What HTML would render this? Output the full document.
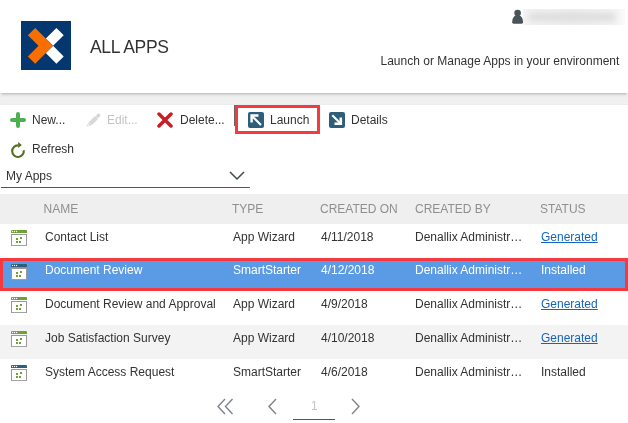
<!DOCTYPE html>
<html><head><meta charset="utf-8">
<style>
*{margin:0;padding:0;box-sizing:border-box}
html,body{width:628px;height:423px;overflow:hidden;background:#fff;}
body{will-change:transform;font-family:"Liberation Sans",sans-serif;font-size:12px;color:#333}
.abs{position:absolute}
.t{position:absolute;white-space:nowrap;line-height:14px}
.row{position:absolute;left:0;width:628px}
.link{color:#1565c0;text-decoration:underline}
</style></head><body>
<!-- header -->
<div class="abs" style="left:21px;top:21px;width:50px;height:49px;background:#04376f"></div>
<svg class="abs" style="left:21px;top:21px" width="50" height="49" viewBox="0 0 50 49">
  <path d="M35.4 6.9 L42.7 14.2 L32.1 24.8 L24.8 17.5 Z" fill="#fff"/>
  <path d="M24.8 32.1 L32.1 24.8 L42.7 35.4 L35.4 42.7 Z" fill="#fff"/>
  <path d="M14.2 6.9 L32.1 24.8 L14.2 42.7 L6.9 35.4 L17.5 24.8 L6.9 14.2 Z" fill="#f96e00"/>
</svg>
<div class="t" style="left:90px;top:37px;font-size:17.5px;line-height:20px;letter-spacing:-0.3px;color:#333">ALL APPS</div>
<svg class="abs" style="left:511px;top:8px" width="13" height="17" viewBox="0 0 13 17"><path d="M1.2 14.3C1.2 9.8 3.3 6.9 6.6 6.9C9.9 6.9 12 9.8 12 14.3Q12 15.7 10.6 15.7H2.6Q1.2 15.7 1.2 14.3Z" fill="#4a5358"/><circle cx="6.6" cy="5" r="3.3" fill="#4a5358"/></svg>
<div class="abs" style="left:523px;top:9px;width:102px;height:16px;overflow:hidden;background:linear-gradient(90deg,#f4f4f4,#eeeeee 50%,#f4f4f4 90%,#fafafa)">
 <div class="abs" style="left:6px;top:4px;width:86px;height:8px;background:#dcdcdc;filter:blur(3px)"></div>
</div>
<div class="t" style="left:380.5px;top:54px">Launch or Manage Apps in your environment</div>
<!-- header shadow + gray band -->
<div class="abs" style="left:0;top:93px;width:628px;height:12px;background:linear-gradient(#c6c6c6 0px,#c6c6c6 1px,#d8d8d8 1px,#d8d8d8 2px,#e5e5e5 2px,#e5e5e5 3px,#ebebeb 3px,#ebebeb 4px,#f0f0f0 4px,#f0f0f0 11px,#e9eded 11px)"></div>

<div class="abs" style="left:0;top:93px;width:2px;height:4px;background:rgba(240,240,240,0.6)"></div>
<div class="abs" style="left:626px;top:93px;width:2px;height:4px;background:rgba(240,240,240,0.6)"></div>
<!-- toolbar -->
<svg class="abs" style="left:10px;top:112px" width="16" height="16" viewBox="0 0 16 16"><path d="M8 2V14M2 8H14" stroke="#4caf50" stroke-width="4" stroke-linecap="round"/></svg>
<div class="t" style="left:32px;top:113px">New...</div>
<svg class="abs" style="left:82px;top:108px" width="24" height="24" viewBox="0 0 24 24"><path d="M7 14L10 17L4.3 18.5Z" fill="#d8d8d8"/><path d="M7 14L10 17L16 11L13 8Z" fill="#d8d8d8"/><path d="M15.7 8.3L16.7 7.3" stroke="#d8d8d8" stroke-width="3.4" stroke-linecap="round"/><circle cx="6.5" cy="16.5" r="0.7" fill="#fff"/></svg>
<div class="t" style="left:107px;top:113px;color:#c4c4c4">Edit...</div>
<svg class="abs" style="left:157px;top:112px" width="16" height="16" viewBox="0 0 16 16"><path d="M2 2L14 14M14 2L2 14" stroke="#c62026" stroke-width="3.5" stroke-linecap="round"/></svg>
<div class="t" style="left:180px;top:113px">Delete...</div>
<div class="abs" style="left:234px;top:105px;width:1px;height:21px;background:#666"></div>
<div class="abs" style="left:235px;top:105px;width:85px;height:29px;border:3px solid #f43a3e"></div>
<svg class="abs" style="left:248px;top:112px" width="16" height="16" viewBox="0 0 16 16"><rect width="16" height="16" rx="2" fill="#2f5e7b"/><path d="M3.6 10.5V3.6H10.5" stroke="#fff" stroke-width="2.5" fill="none"/><path d="M4 4L13 13" stroke="#fff" stroke-width="2" fill="none"/></svg>
<div class="t" style="left:270px;top:113px">Launch</div>
<svg class="abs" style="left:329px;top:112px" width="16" height="16" viewBox="0 0 16 16"><rect width="16" height="16" rx="2" fill="#2f5e7b"/><path d="M11.8 5.5V11.8H5.5" stroke="#fff" stroke-width="2.6" fill="none"/><path d="M11.5 11.5L3.3 3.3" stroke="#fff" stroke-width="2" fill="none"/></svg>
<div class="t" style="left:351px;top:113px">Details</div>
<svg class="abs" style="left:6px;top:139px" width="24" height="24" viewBox="0 0 24 24"><path d="M12.3 6.4A5.8 5.8 0 1 0 17.7 11.2" stroke="#556b1e" stroke-width="2.1" fill="none"/><path d="M12.2 3L15.8 5.9L12.2 8.9Z" fill="#556b1e"/></svg>
<div class="t" style="left:32px;top:142px">Refresh</div>

<!-- dropdown -->
<div class="t" style="left:6px;top:169px">My Apps</div>
<svg class="abs" style="left:229px;top:171px" width="16" height="10" viewBox="0 0 16 10"><path d="M1 1L8 8L15 1" stroke="#3d4a50" stroke-width="1.5" fill="none"/></svg>
<div class="abs" style="left:1px;top:187px;width:249px;height:1px;background:#555"></div>

<!-- table header -->
<div class="abs" style="left:0;top:194px;width:628px;height:30px;background:#efefef"></div>
<div class="t" style="left:43.5px;top:202px;color:#8f8f8f">NAME</div>
<div class="t" style="left:232px;top:202px;color:#8f8f8f">TYPE</div>
<div class="t" style="left:320px;top:202px;color:#8f8f8f">CREATED ON</div>
<div class="t" style="left:415px;top:202px;color:#8f8f8f">CREATED BY</div>
<div class="t" style="left:540px;top:202px;color:#8f8f8f">STATUS</div>

<div>
<div class="row" style="top:224px;height:34px;background:#fff;color:#333">
<svg class="abs" style="left:11px;top:6px" width="16" height="16" viewBox="0 0 16 16"><path d="M0 3V1Q0 0 1 0H15Q16 0 16 1V3Z" fill="#6ea333"/><circle cx="1.6" cy="1.5" r="0.65" fill="#fff"/><circle cx="3.6" cy="1.5" r="0.65" fill="#fff"/><circle cx="5.6" cy="1.5" r="0.65" fill="#fff"/><rect x="0.5" y="4.5" width="15" height="11.1" fill="#fff" stroke="#999" stroke-width="1"/><rect x="5" y="8" width="2" height="2" fill="#6ea333"/><rect x="9" y="7" width="2" height="2" fill="#6ea333"/><rect x="5" y="11" width="2" height="2" fill="#6ea333"/><rect x="8" y="11" width="2" height="2" fill="#6ea333"/></svg>
<div class="t" style="left:45px;top:6px">Contact List</div>
<div class="t" style="left:233px;top:6px">App Wizard</div>
<div class="t" style="left:321px;top:6px">4/11/2018</div>
<div class="t" style="left:415px;top:6px">Denallix Administr…</div>
<div class="t link" style="left:541px;top:6px">Generated</div>
</div>
<div class="row" style="top:258px;height:33px;background:#5b9be6;color:#fff">
<svg class="abs" style="left:11px;top:6px" width="16" height="16" viewBox="0 0 16 16"><path d="M0 3V1Q0 0 1 0H15Q16 0 16 1V3Z" fill="#2f5e7b"/><circle cx="1.6" cy="1.5" r="0.65" fill="#fff"/><circle cx="3.6" cy="1.5" r="0.65" fill="#fff"/><circle cx="5.6" cy="1.5" r="0.65" fill="#fff"/><rect x="0.5" y="4.5" width="15" height="11.1" fill="#fff" stroke="#999" stroke-width="1"/><rect x="5" y="8" width="2" height="2" fill="#6ea333"/><rect x="9" y="7" width="2" height="2" fill="#6ea333"/><rect x="5" y="11" width="2" height="2" fill="#6ea333"/><rect x="8" y="11" width="2" height="2" fill="#6ea333"/></svg>
<div class="t" style="left:45px;top:5px">Document Review</div>
<div class="t" style="left:233px;top:5px">SmartStarter</div>
<div class="t" style="left:321px;top:5px">4/12/2018</div>
<div class="t" style="left:415px;top:5px">Denallix Administr…</div>
<div class="t" style="left:541px;top:5px">Installed</div>
</div>
<div class="row" style="top:291px;height:34px;background:#fff;color:#333">
<svg class="abs" style="left:11px;top:6px" width="16" height="16" viewBox="0 0 16 16"><path d="M0 3V1Q0 0 1 0H15Q16 0 16 1V3Z" fill="#6ea333"/><circle cx="1.6" cy="1.5" r="0.65" fill="#fff"/><circle cx="3.6" cy="1.5" r="0.65" fill="#fff"/><circle cx="5.6" cy="1.5" r="0.65" fill="#fff"/><rect x="0.5" y="4.5" width="15" height="11.1" fill="#fff" stroke="#999" stroke-width="1"/><rect x="5" y="8" width="2" height="2" fill="#6ea333"/><rect x="9" y="7" width="2" height="2" fill="#6ea333"/><rect x="5" y="11" width="2" height="2" fill="#6ea333"/><rect x="8" y="11" width="2" height="2" fill="#6ea333"/></svg>
<div class="t" style="left:45px;top:6px">Document Review and Approval</div>
<div class="t" style="left:233px;top:6px">App Wizard</div>
<div class="t" style="left:321px;top:6px">4/9/2018</div>
<div class="t" style="left:415px;top:6px">Denallix Administr…</div>
<div class="t link" style="left:541px;top:6px">Generated</div>
</div>
<div class="row" style="top:325px;height:34px;background:#f3f3f3;color:#333">
<svg class="abs" style="left:11px;top:6px" width="16" height="16" viewBox="0 0 16 16"><path d="M0 3V1Q0 0 1 0H15Q16 0 16 1V3Z" fill="#6ea333"/><circle cx="1.6" cy="1.5" r="0.65" fill="#fff"/><circle cx="3.6" cy="1.5" r="0.65" fill="#fff"/><circle cx="5.6" cy="1.5" r="0.65" fill="#fff"/><rect x="0.5" y="4.5" width="15" height="11.1" fill="#fff" stroke="#999" stroke-width="1"/><rect x="5" y="8" width="2" height="2" fill="#6ea333"/><rect x="9" y="7" width="2" height="2" fill="#6ea333"/><rect x="5" y="11" width="2" height="2" fill="#6ea333"/><rect x="8" y="11" width="2" height="2" fill="#6ea333"/></svg>
<div class="t" style="left:45px;top:6px">Job Satisfaction Survey</div>
<div class="t" style="left:233px;top:6px">App Wizard</div>
<div class="t" style="left:321px;top:6px">4/10/2018</div>
<div class="t" style="left:415px;top:6px">Denallix Administr…</div>
<div class="t link" style="left:541px;top:6px">Generated</div>
</div>
<div class="row" style="top:359px;height:34px;background:#fff;color:#333">
<svg class="abs" style="left:11px;top:6px" width="16" height="16" viewBox="0 0 16 16"><path d="M0 3V1Q0 0 1 0H15Q16 0 16 1V3Z" fill="#2f5e7b"/><circle cx="1.6" cy="1.5" r="0.65" fill="#fff"/><circle cx="3.6" cy="1.5" r="0.65" fill="#fff"/><circle cx="5.6" cy="1.5" r="0.65" fill="#fff"/><rect x="0.5" y="4.5" width="15" height="11.1" fill="#fff" stroke="#999" stroke-width="1"/><rect x="5" y="8" width="2" height="2" fill="#6ea333"/><rect x="9" y="7" width="2" height="2" fill="#6ea333"/><rect x="5" y="11" width="2" height="2" fill="#6ea333"/><rect x="8" y="11" width="2" height="2" fill="#6ea333"/></svg>
<div class="t" style="left:45px;top:5.5px">System Access Request</div>
<div class="t" style="left:233px;top:5.5px">SmartStarter</div>
<div class="t" style="left:321px;top:5.5px">4/6/2018</div>
<div class="t" style="left:415px;top:5.5px">Denallix Administr…</div>
<div class="t" style="left:541px;top:5.5px">Installed</div>
</div>
</div>
<div class="abs" style="left:0;top:258px;width:628px;height:33px;border:3px solid #f43a3e"></div>
<svg class="abs" style="left:216px;top:398px" width="20" height="17" viewBox="0 0 20 17"><path d="M9 1L2 8.5L9 16M16.5 1L9.5 8.5L16.5 16" stroke="#7f8489" stroke-width="1.4" fill="none"/></svg>
<svg class="abs" style="left:267px;top:398px" width="11" height="17" viewBox="0 0 11 17"><path d="M9 1L2 8.5L9 16" stroke="#7f8489" stroke-width="1.4" fill="none"/></svg>
<div class="t" style="left:311px;top:399px;color:#c4c4c4">1</div>
<div class="abs" style="left:293px;top:419px;width:42px;height:1px;background:#555"></div>
<svg class="abs" style="left:350px;top:398px" width="11" height="17" viewBox="0 0 11 17"><path d="M2 1L9 8.5L2 16" stroke="#7f8489" stroke-width="1.4" fill="none"/></svg>
</body></html>
